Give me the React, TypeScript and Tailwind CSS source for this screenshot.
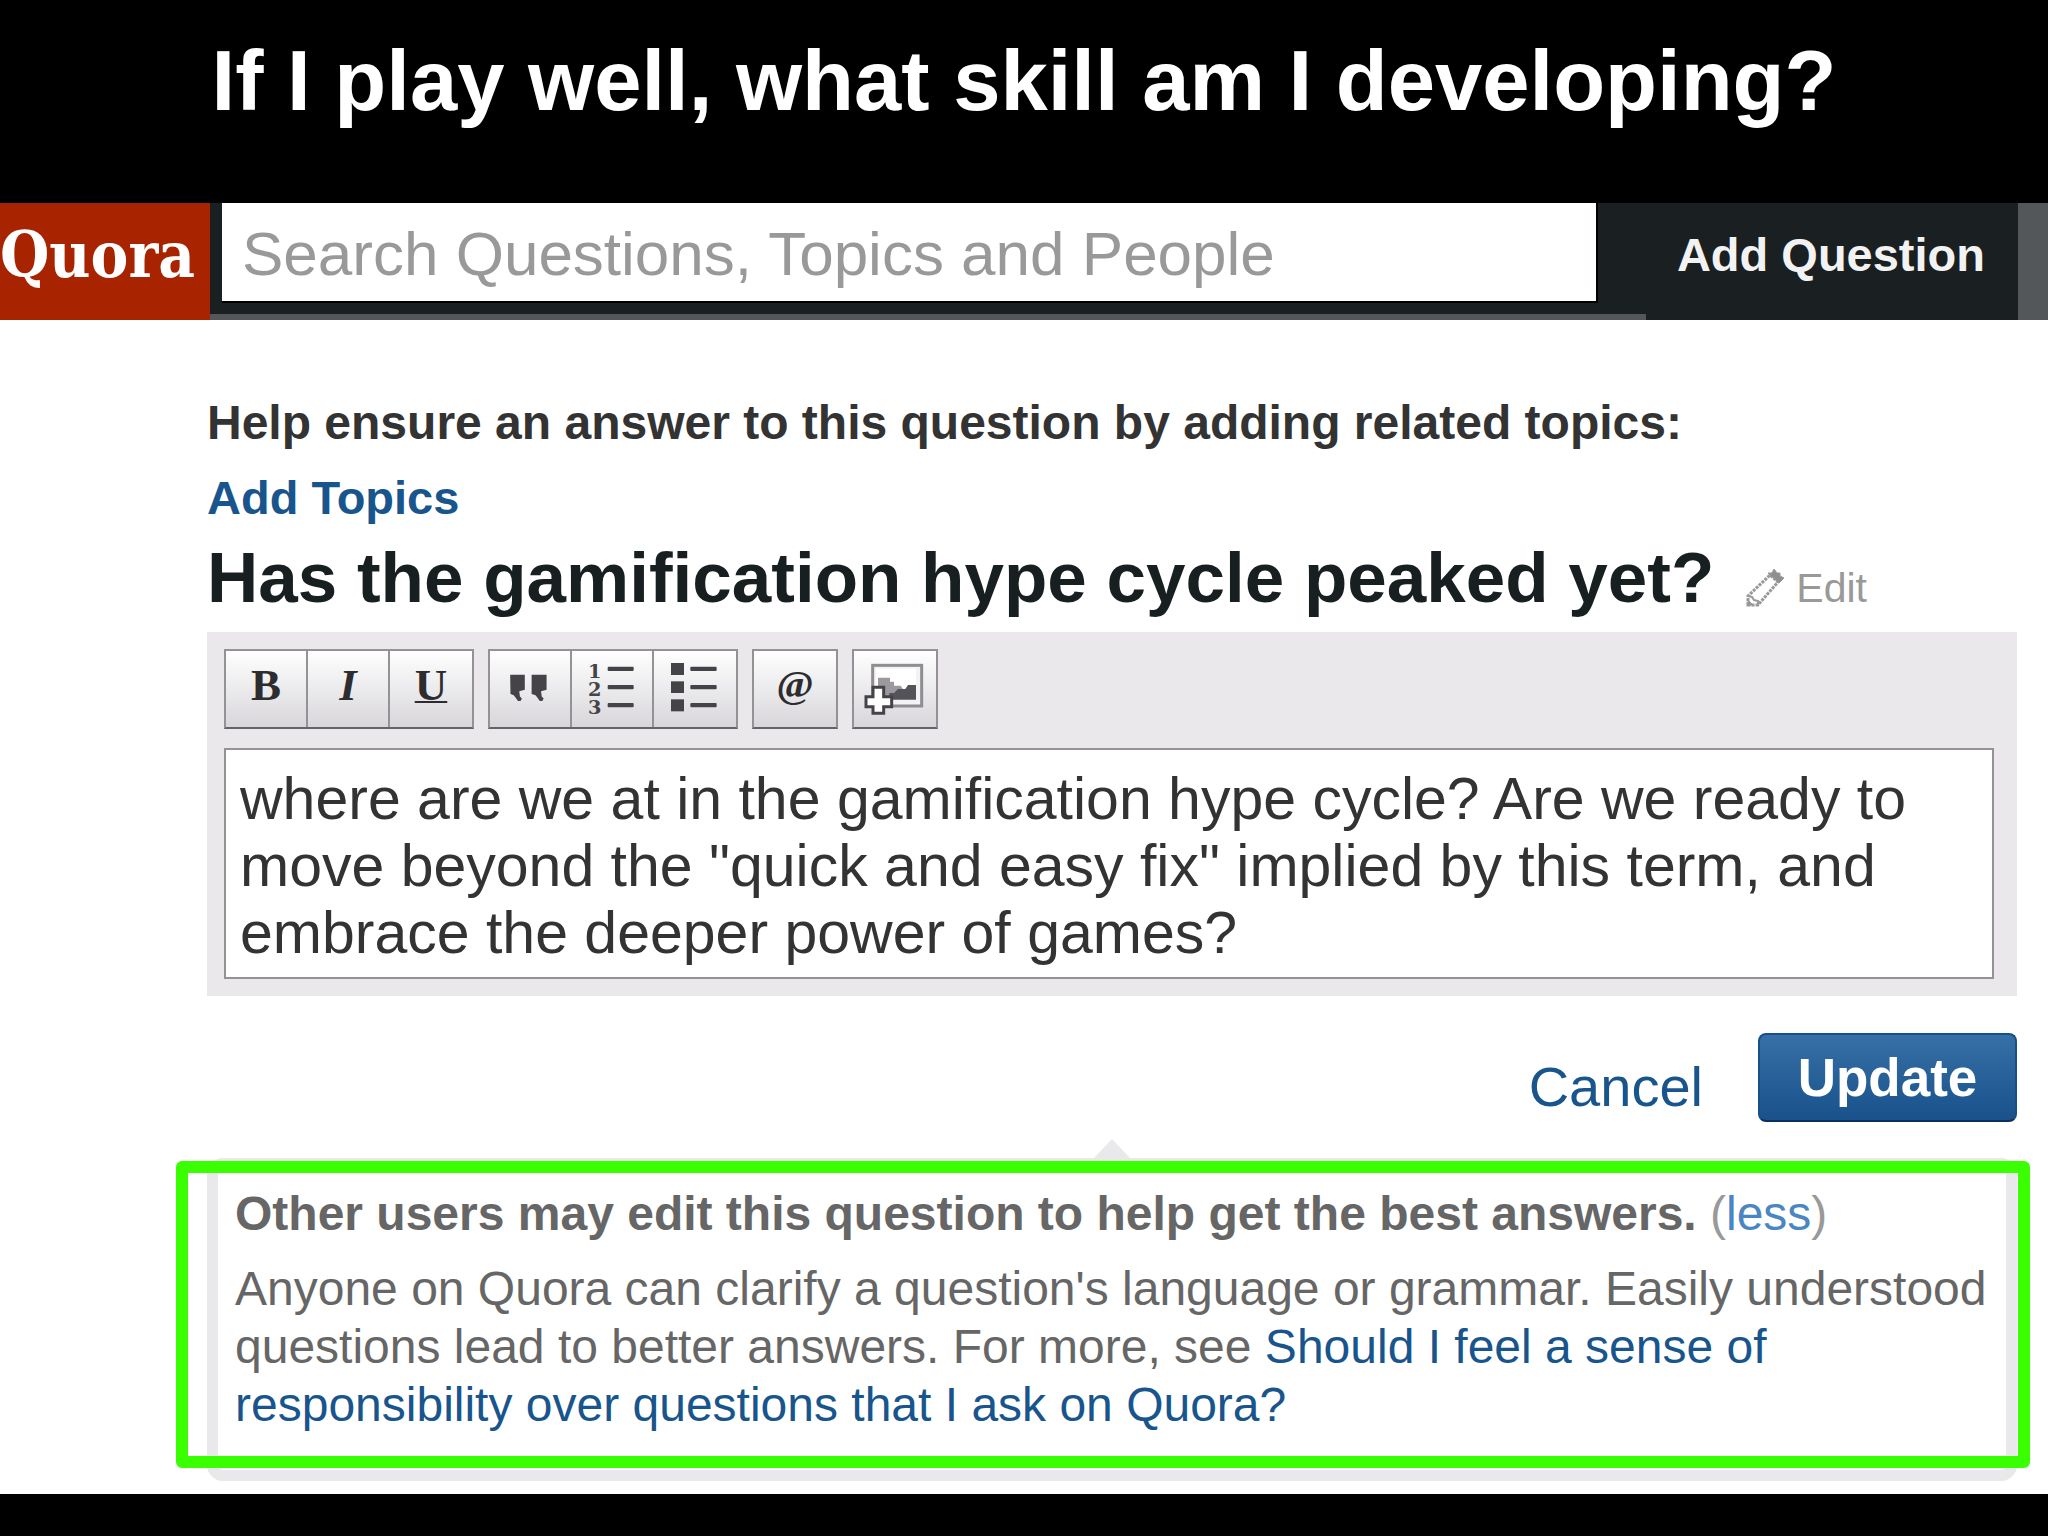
import { useState, type ReactNode } from "react";

const INITIAL_DETAILS = [
  "where are we at in the gamification hype cycle? Are we ready to",
  'move beyond the "quick and easy fix" implied by this term, and',
  "embrace the deeper power of games?",
].join("\n");

function QuoteIcon() {
  return (
    <svg viewBox="6 6 246 228" className="h-full w-full" fill="#454348" aria-hidden="true">
      <path d="M68 76h45v46l-17 5 2 16 6 6-4 8h-8l-7-10-6-8-10-4z" />
      <path d="M134 76h46v46l-17 5 2 16 6 6-4 8h-8l-7-10-6-8-12-4z" />
    </svg>
  );
}

function OrderedListIcon() {
  return (
    <svg viewBox="6 6 240 228" className="h-full w-full" fill="#454348" aria-hidden="true">
      <g fontFamily="DejaVu Serif" fontWeight="700" fontSize="58">
        <text x="54" y="86">1</text>
        <text x="54" y="141">2</text>
        <text x="54" y="196">3</text>
      </g>
      <rect x="113" y="53" width="78" height="13" rx="3" />
      <rect x="113" y="108" width="78" height="13" rx="3" />
      <rect x="113" y="162" width="78" height="13" rx="3" />
    </svg>
  );
}

function BulletListIcon() {
  return (
    <svg viewBox="6 6 240 228" className="h-full w-full" fill="#454348" aria-hidden="true">
      <rect x="54" y="42" width="39" height="36" />
      <rect x="54" y="97" width="39" height="35" />
      <rect x="54" y="151" width="39" height="36" />
      <rect x="112" y="53" width="79" height="13" rx="3" />
      <rect x="112" y="108" width="79" height="13" rx="3" />
      <rect x="112" y="162" width="79" height="13" rx="3" />
    </svg>
  );
}

function AddImageIcon() {
  return (
    <svg viewBox="6 6 246 228" className="h-full w-full" aria-hidden="true">
      <rect x="62" y="49" width="147" height="122" fill="#f3f2f4" stroke="#8f8d91" strokeWidth="9" />
      <rect x="73" y="59" width="119" height="92" fill="#fff" />
      <path d="M78 86h36v12h12v12h20l8 12v28H78z" fill="#9b999d" />
      <path d="M112 132h14l12-12h22l8-12h24v44h-80z" fill="#55535a" />
      <path
        d="M63 115h32v28h24v30h-24v20H63v-20H42v-30h21z"
        fill="#fff"
        stroke="#454348"
        strokeWidth="9"
      />
    </svg>
  );
}

function PencilIcon() {
  return (
    <svg
      viewBox="0 0 38 38"
      className="h-[38px] w-[38px] self-center"
      fill="none"
      stroke="#999"
      aria-hidden="true"
    >
      <path d="M2 36V27L24 6l8 7L12 36z" strokeWidth="3" strokeDasharray="3 1" />
      <path d="M2 27l4 1 2 3 4 1v4" strokeWidth="2" />
      <path d="M22 4h4l2-4 3 4h3v3l4 2-5 5z" fill="#8f8f8f" strokeWidth="1" />
      <path d="M2 31v5h5z" fill="#999" />
    </svg>
  );
}

function ToolGroup({ children }: { children: ReactNode }) {
  return (
    <div className="flex h-20 divide-x-2 divide-[#949296] border-2 border-[#949296] border-b-[#656368]">
      {children}
    </div>
  );
}

function ToolButton({ label, children }: { label: string; children: ReactNode }) {
  return (
    <button
      type="button"
      aria-label={label}
      className="flex w-[82px] items-center justify-center bg-linear-to-b from-white to-[#d8d6da] font-['Liberation_Serif',serif] text-[45px] leading-none font-bold text-[#2d2d30]"
    >
      {children}
    </button>
  );
}

export default function App() {
  const [search, setSearch] = useState("");
  const [details, setDetails] = useState(INITIAL_DETAILS);

  return (
    <div className="min-h-screen bg-black font-['Liberation_Sans',Arial,sans-serif]">
      <header className="px-8 pt-[33px] pb-[74px] text-center">
        <h1 className="text-[85px] leading-[96px] font-bold text-white">
          If I play well, what skill am I developing?
        </h1>
      </header>

      <nav className="flex h-[117px] bg-[#1a1f21]">
        <a
          href="#home"
          className="w-[210px] shrink-0 bg-[#a82400] pt-3 font-['DejaVu_Serif_Condensed','DejaVu_Serif',serif] text-[63px] leading-[80px] font-bold text-white"
        >
          Quora
        </a>
        <div className="flex-1 border-b-[6px] border-[#54565a] pr-[48px] pl-3">
          <input
            type="text"
            aria-label="Search"
            placeholder="Search Questions, Topics and People"
            value={search}
            onChange={(event) => setSearch(event.target.value)}
            className="h-[100px] w-full border-r-2 border-b-2 border-black bg-white pt-0.5 pl-5 text-[62px] text-[#333] outline-none placeholder:text-[#999]"
          />
        </div>
        <button
          type="button"
          className="w-[372px] shrink-0 pr-[33px] pb-3 text-right text-[47px] font-bold text-[#f2f2f2]"
        >
          Add Question
        </button>
        <div className="w-[30px] shrink-0 bg-[#54575a]" />
      </nav>

      <main className="bg-white pt-[75px] pr-[31px] pb-[13px] pl-[207px]">
        <p className="text-[48px] leading-[56px] font-bold text-[#333]">
          Help ensure an answer to this question by adding related topics:
        </p>
        <a href="#topics" className="mt-[19px] block w-fit text-[47px] leading-[56px] font-bold text-[#19558d]">
          Add Topics
        </a>
        <div className="mt-3 flex items-baseline gap-8">
          <h2 className="text-[71px] leading-[80px] font-bold text-[#181f21]">
            Has the gamification hype cycle peaked yet?
          </h2>
          <a href="#edit" className="flex items-baseline gap-3 text-[41px] leading-[48px] text-[#999]">
            <PencilIcon />
            Edit
          </a>
        </div>

        <section className="mt-3.5 bg-[#eae8eb] pt-[17px] pr-[23px] pb-[17px] pl-[17px]">
          <div className="flex gap-3.5">
            <ToolGroup>
              <ToolButton label="Bold">
                <span className="pb-2">B</span>
              </ToolButton>
              <ToolButton label="Italic">
                <span className="pb-2 italic">I</span>
              </ToolButton>
              <ToolButton label="Underline">
                <span className="pb-2 underline decoration-2">U</span>
              </ToolButton>
            </ToolGroup>
            <ToolGroup>
              <ToolButton label="Quote">
                <QuoteIcon />
              </ToolButton>
              <ToolButton label="Numbered list">
                <OrderedListIcon />
              </ToolButton>
              <ToolButton label="Bulleted list">
                <BulletListIcon />
              </ToolButton>
            </ToolGroup>
            <ToolGroup>
              <ToolButton label="Mention">
                <span className="pb-2 text-[40px]">@</span>
              </ToolButton>
            </ToolGroup>
            <ToolGroup>
              <ToolButton label="Add image">
                <AddImageIcon />
              </ToolButton>
            </ToolGroup>
          </div>
          <textarea
            aria-label="Question details"
            rows={3}
            value={details}
            onChange={(event) => setDetails(event.target.value)}
            className="mt-[19px] block w-full resize-none overflow-hidden border-2 border-[#949296] bg-white px-3.5 pt-4 pb-2.5 text-[59px] leading-[67px] text-[#333] outline-none"
          />
        </section>

        <div className="mt-[37px] flex items-end justify-end gap-[55px]">
          <button type="button" className="text-[56px] leading-[70px] text-[#19558d]">
            Cancel
          </button>
          <button
            type="button"
            className="h-[89px] w-[259px] rounded-lg border-2 border-[#174f88] border-b-[#0c305c] bg-linear-to-b from-[#3570a6] to-[#19528b] text-[53px] leading-none font-bold text-white"
          >
            Update
          </button>
        </div>

        <aside className="relative mt-[36px] rounded-2xl border-[11px] border-[#e9e8eb] px-[17px] pt-4 pb-9 text-[48px] leading-[58px] text-[#666]">
          <svg
            viewBox="0 0 36 19"
            className="absolute -top-[30px] left-1/2 h-[19px] w-9 -translate-x-1/2"
            fill="#e9e8eb"
            aria-hidden="true"
          >
            <path d="M0 19L18 0l18 19z" />
          </svg>
          <p>
            <strong>Other users may edit this question to help get the best answers.</strong>{" "}
            <span className="text-[#999]">
              (
              <a href="#less" className="text-[#4a86c2]">
                less
              </a>
              )
            </span>
          </p>
          <p className="mt-[17px]">
            Anyone on Quora can clarify a question&apos;s language or grammar. Easily understood
            questions lead to better answers. For more, see{" "}
            <a href="#responsibility" className="text-[#19558d]">
              Should I feel a sense of responsibility over questions that I ask on Quora?
            </a>
          </p>
          <div className="pointer-events-none absolute -top-2 -right-6 bottom-0.5 -left-[42px] rounded-md border-[12px] border-[#3aff00]" />
        </aside>
      </main>
    </div>
  );
}
